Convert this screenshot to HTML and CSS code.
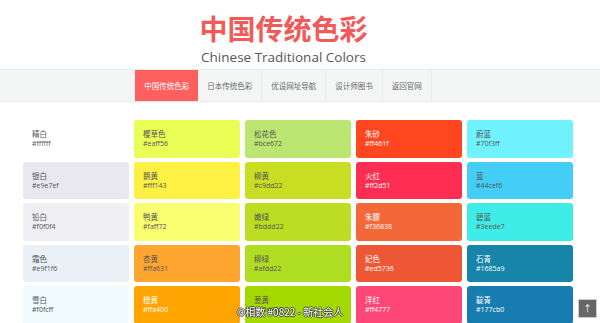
FILE: index.html
```html
<!DOCTYPE html>
<html lang="zh-CN">
<head>
<meta charset="utf-8">
<title>中国传统色彩</title>
<link rel="stylesheet" href="styles.css">
</head>
<body>
	<div class="header">
		<h1 class="title">中国传统色彩</h1>
		<p class="subtitle">Chinese Traditional Colors</p>
	</div>
	<div class="nav">
		<ul class="nav-list">
			<li class="nav-item active">中国传统色彩</li>
			<li class="nav-item">日本传统色彩</li>
			<li class="nav-item">优设网址导航</li>
			<li class="nav-item">设计师图书</li>
			<li class="nav-item">返回官网</li>
		</ul>
	</div>
	<div class="colors">
		<div class="card dark" style="background:#ffffff"><span class="name">精白</span><span class="hex">#ffffff</span></div>
		<div class="card dark" style="background:#eaff56"><span class="name">樱草色</span><span class="hex">#eaff56</span></div>
		<div class="card dark" style="background:#bce672"><span class="name">松花色</span><span class="hex">#bce672</span></div>
		<div class="card light" style="background:#ff461f"><span class="name">朱砂</span><span class="hex">#ff461f</span></div>
		<div class="card dark" style="background:#70f3ff"><span class="name">蔚蓝</span><span class="hex">#70f3ff</span></div>

		<div class="card dark" style="background:#e9e7ef"><span class="name">银白</span><span class="hex">#e9e7ef</span></div>
		<div class="card dark" style="background:#fff143"><span class="name">鹅黄</span><span class="hex">#fff143</span></div>
		<div class="card dark" style="background:#c9dd22"><span class="name">柳黄</span><span class="hex">#c9dd22</span></div>
		<div class="card light" style="background:#ff2d51"><span class="name">火红</span><span class="hex">#ff2d51</span></div>
		<div class="card dark" style="background:#44cef6"><span class="name">蓝</span><span class="hex">#44cef6</span></div>

		<div class="card dark" style="background:#f0f0f4"><span class="name">铅白</span><span class="hex">#f0f0f4</span></div>
		<div class="card dark" style="background:#faff72"><span class="name">鸭黄</span><span class="hex">#faff72</span></div>
		<div class="card dark" style="background:#bddd22"><span class="name">嫩绿</span><span class="hex">#bddd22</span></div>
		<div class="card light" style="background:#f36838"><span class="name">朱膘</span><span class="hex">#f36838</span></div>
		<div class="card dark" style="background:#3eede7"><span class="name">碧蓝</span><span class="hex">#3eede7</span></div>

		<div class="card dark" style="background:#e9f1f6"><span class="name">霜色</span><span class="hex">#e9f1f6</span></div>
		<div class="card dark" style="background:#ffa631"><span class="name">杏黄</span><span class="hex">#ffa631</span></div>
		<div class="card dark" style="background:#afdd22"><span class="name">柳绿</span><span class="hex">#afdd22</span></div>
		<div class="card light" style="background:#ed5736"><span class="name">妃色</span><span class="hex">#ed5736</span></div>
		<div class="card light" style="background:#1685a9"><span class="name">石青</span><span class="hex">#1685a9</span></div>

		<div class="card dark" style="background:#f0fcff"><span class="name">雪白</span><span class="hex">#f0fcff</span></div>
		<div class="card light" style="background:#ffa400"><span class="name">橙黄</span><span class="hex">#ffa400</span></div>
		<div class="card dark" style="background:#a3d900"><span class="name">葱黄</span><span class="hex">#a3d900</span></div>
		<div class="card light" style="background:#ff4777"><span class="name">洋红</span><span class="hex">#ff4777</span></div>
		<div class="card light" style="background:#177cb0"><span class="name">靛青</span><span class="hex">#177cb0</span></div>
	</div>
	<div class="watermark">©相数 #0822 - 新社会人</div>
	<a class="to-top" href="#">&#8593;</a>
</body>
</html>
```

FILE: styles.css
```css
body {
	margin: 0;
	background: #fff;
	font-family: "Open Sans", "Noto Sans CJK SC", sans-serif;
	overflow: hidden;
}

.header {
	padding: 9px 33px 0 0;
	text-align: center;
}

.title {
	margin: 0;
	font-family: "Noto Sans CJK SC", sans-serif;
	font-size: 28px;
	line-height: 38px;
	font-weight: bold;
	color: #f25a5a;
}

.subtitle {
	margin: 0;
	font-size: 13.5px;
	line-height: 20px;
	color: #555;
}

.nav {
	margin-top: 2px;
	background: #f4f6f6;
	border-top: 1px solid #e9ecec;
	border-bottom: 1px solid #e9ecec;
}

.nav-list {
	display: flex;
	justify-content: center;
	margin: 0;
	padding: 0 33px 0 0;
	list-style: none;
}

.nav-item {
	padding: 0 9px;
	height: 31px;
	line-height: 31px;
	font-family: "Noto Sans CJK SC", sans-serif;
	font-size: 7.5px;
	color: #666;
	border-right: 1px solid #e9ecec;
}

.nav-item.active {
	background: #ff5f5f;
	color: #fff;
	border-right: none;
}

.colors {
	display: grid;
	grid-template-columns: repeat(5, 106px);
	grid-auto-rows: 37.5px;
	gap: 4px 5px;
	padding: 18px 0 0 23px;
}

.card {
	display: flex;
	flex-direction: column;
	padding: 9px 9px 0;
	border-radius: 3px;
}

.name {
	font-family: "Noto Sans CJK SC", sans-serif;
	font-size: 7.5px;
	line-height: 10px;
}

.hex {
	font-size: 7px;
	line-height: 9px;
}

.dark {color: #555;}
.light {color: #fff;}

.watermark {
	position: fixed;
	left: 237px;
	bottom: 4px;
	font-family: "Noto Sans CJK SC", sans-serif;
	font-size: 10px;
	line-height: 14px;
	color: #fff;
	text-shadow: -1px 0 #444, 1px 0 #444, 0 -1px #444, 0 1px #444;
}

.to-top {
	position: fixed;
	right: 3px;
	bottom: 5px;
	width: 17px;
	height: 17px;
	line-height: 17px;
	text-align: center;
	font-size: 9px;
	color: #fff;
	text-decoration: none;
	background: #666;
	border: 1px solid #ccc;
}
```
